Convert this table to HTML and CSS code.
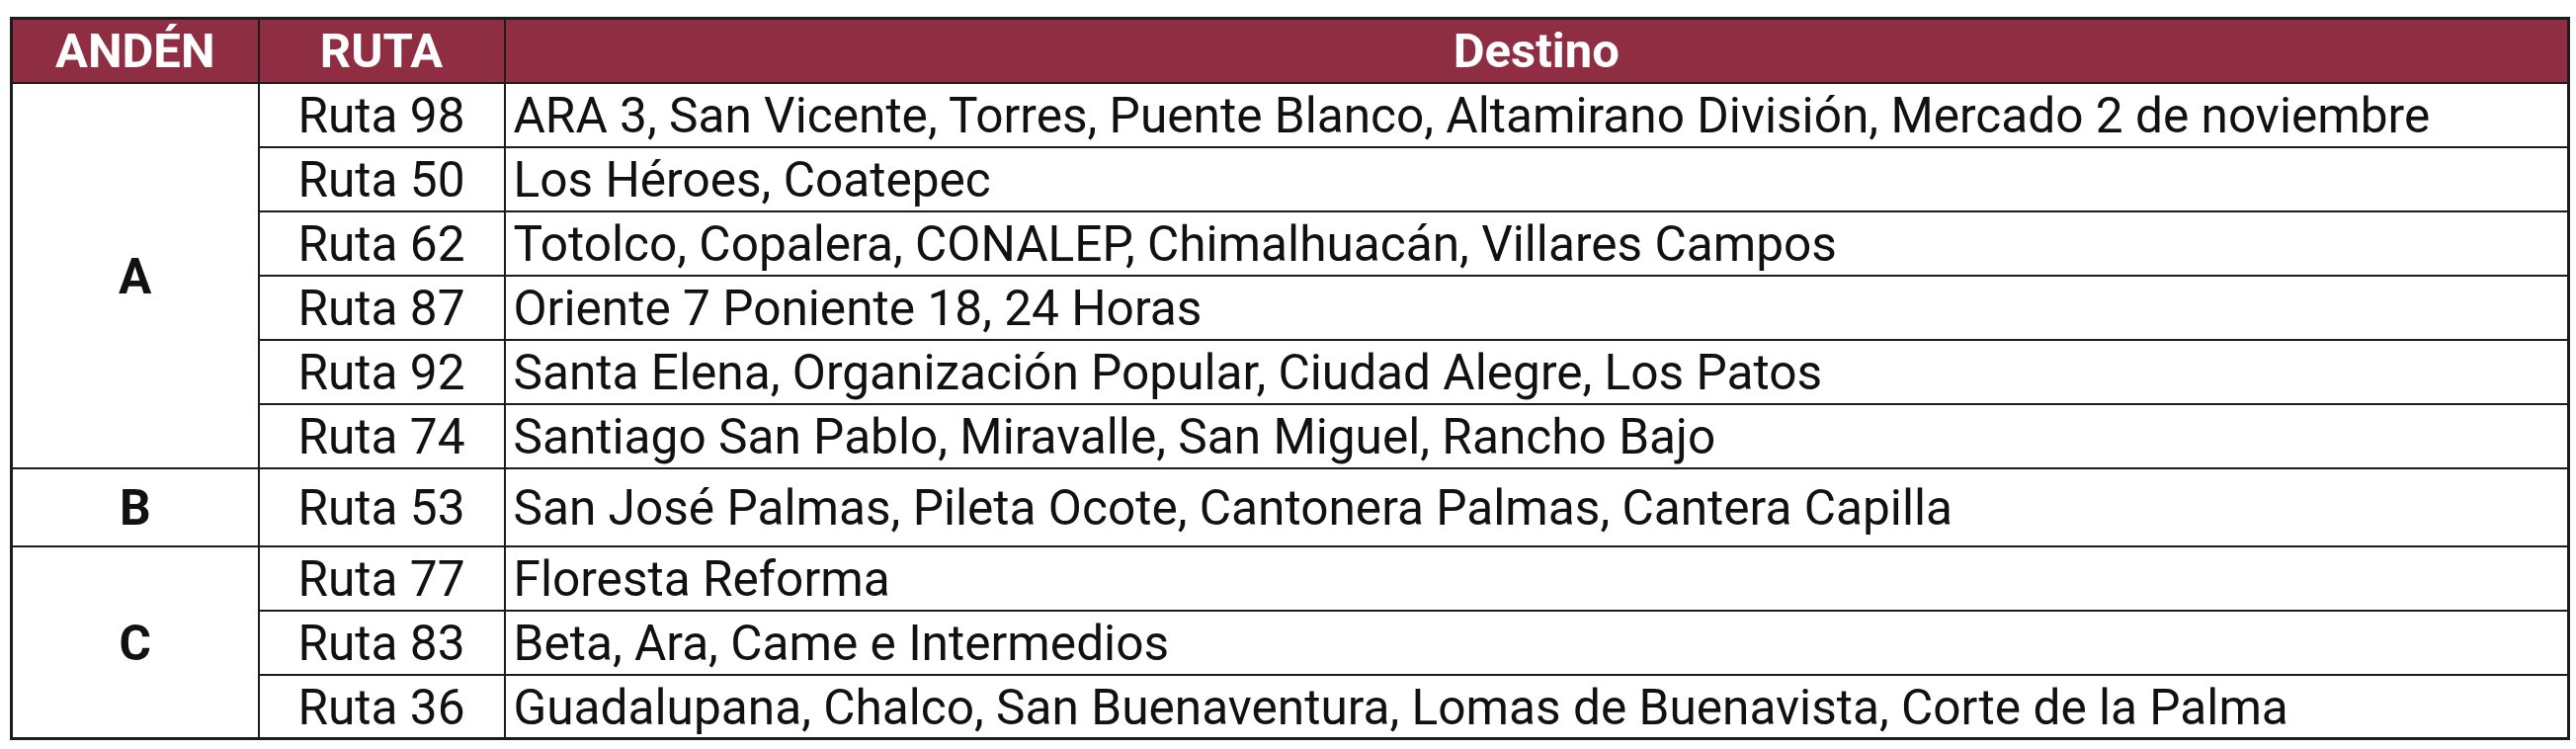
FILE: index.html
```html
<!DOCTYPE html>
<html lang="es">
<head>
<meta charset="utf-8">
<title>Andenes y rutas</title>
<link rel="stylesheet" href="styles.css">
</head>
<body>
<div class="page">
<table class="routes">
  <colgroup>
    <col class="c-anden">
    <col class="c-ruta">
    <col class="c-destino">
  </colgroup>
  <thead>
    <tr class="head">
      <th>ANDÉN</th>
      <th>RUTA</th>
      <th>Destino</th>
    </tr>
  </thead>
  <tbody>
    <tr>
      <td class="anden" rowspan="6">A</td>
      <td class="ruta">Ruta 98</td>
      <td class="dest">ARA 3, San Vicente, Torres, Puente Blanco, Altamirano División, Mercado 2 de noviembre</td>
    </tr>
    <tr><td class="ruta">Ruta 50</td><td class="dest">Los Héroes, Coatepec</td></tr>
    <tr><td class="ruta">Ruta 62</td><td class="dest">Totolco, Copalera, CONALEP, Chimalhuacán, Villares Campos</td></tr>
    <tr><td class="ruta">Ruta 87</td><td class="dest">Oriente 7 Poniente 18, 24 Horas</td></tr>
    <tr><td class="ruta">Ruta 92</td><td class="dest">Santa Elena, Organización Popular, Ciudad Alegre, Los Patos</td></tr>
    <tr><td class="ruta">Ruta 74</td><td class="dest">Santiago San Pablo, Miravalle, San Miguel, Rancho Bajo</td></tr>
    <tr class="tall">
      <td class="anden">B</td>
      <td class="ruta">Ruta 53</td>
      <td class="dest">San José Palmas, Pileta Ocote, Cantonera Palmas, Cantera Capilla</td>
    </tr>
    <tr>
      <td class="anden" rowspan="3">C</td>
      <td class="ruta">Ruta 77</td>
      <td class="dest">Floresta Reforma</td>
    </tr>
    <tr><td class="ruta">Ruta 83</td><td class="dest">Beta, Ara, Came e Intermedios</td></tr>
    <tr><td class="ruta">Ruta 36</td><td class="dest">Guadalupana, Chalco, San Buenaventura, Lomas de Buenavista, Corte de la Palma</td></tr>
  </tbody>
</table>
</div>
</body>
</html>
```

FILE: styles.css
```css
html, body {
  margin: 0;
  padding: 0;
  background: #ffffff;
}

.page {
  padding: 17px 0 0 10px;
}

.routes {
  border-collapse: collapse;
  table-layout: fixed;
  width: 2591px;
  font-family: Roboto, "Liberation Sans", sans-serif;
  font-size: 49.6px;
  color: #111111;
  border: 3px solid #1c1c1c;
}

.c-anden { width: 250px; }
.c-ruta { width: 249px; }

.routes th,
.routes td {
  border: 2px solid #1c1c1c;
  padding: 0;
  line-height: 1;
  white-space: nowrap;
  overflow: hidden;
}

.routes td {
  padding-top: 4px;
}

.routes tr {
  height: 65px;
}

.routes tr.tall {
  height: 79px;
}

.head th {
  background: #8f2d43;
  color: #ffffff;
  font-weight: 700;
  font-size: 49px;
  text-align: center;
}

.anden {
  font-weight: 700;
  text-align: center;
}

.ruta {
  text-align: center;
}

.routes td.dest {
  text-align: left;
  padding-left: 8px;
}
```
